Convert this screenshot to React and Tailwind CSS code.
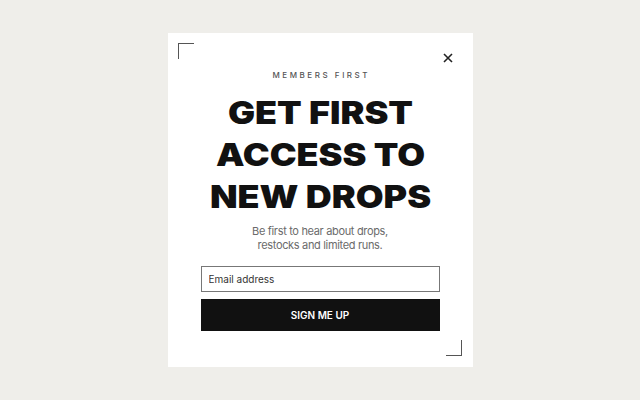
import React from 'react';

export default function App() {
  return (
    <div className="min-h-screen w-full bg-[#efeeea] flex items-center justify-center" style={{ fontFamily: 'Inter, "Noto Sans", sans-serif' }}>
      <div className="relative w-[305px] h-[334px] bg-white px-[33px] pt-[36px] flex flex-col items-center">
        {/* corner marks */}
        <div className="absolute left-[10px] top-[10px] w-[16px] h-[16px] border-l border-t border-[#555]" />
        <div className="absolute right-[11px] bottom-[11px] w-[16px] h-[16px] border-r border-b border-[#555]" />

        <button className="absolute right-[20px] top-[20px] w-[10px] h-[10px] text-[#222]" aria-label="Close">
          <svg viewBox="0 0 10 10" className="w-[10px] h-[10px]" fill="none" stroke="currentColor" strokeWidth="1.6">
            <path d="M1 1 L9 9 M9 1 L1 9" />
          </svg>
        </button>

        <p className="text-[8px] leading-[12px] tracking-[0.32em] text-[#555] font-medium pl-[0.32em]">MEMBERS FIRST</p>

        <h1 className="mt-[11px] w-full text-center text-[31px] leading-[42px] font-black text-[#111] scale-x-[1.16]">
          GET FIRST<br />ACCESS TO<br />NEW DROPS
        </h1>

        <p className="mt-[6px] text-center text-[11px] leading-[14px] tracking-[-0.03em] text-[#6b6b6b]">
          Be first to hear about drops,<br />restocks and limited runs.
        </p>

        <input
          type="email"
          placeholder="Email address"
          className="mt-[14px] w-full h-[26px] border border-[#777] px-[7px] text-[10px] text-[#222] placeholder:text-[#333] outline-none"
        />

        <button className="mt-[7px] w-full h-[32px] bg-[#111] text-white text-[10px] font-semibold">
          SIGN ME UP
        </button>
      </div>
    </div>
  );
}
